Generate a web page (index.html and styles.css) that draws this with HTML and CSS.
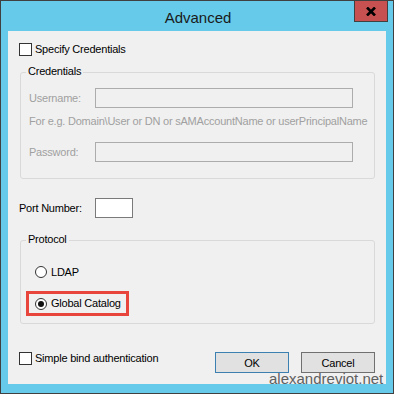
FILE: index.html
```html
<!DOCTYPE html>
<html>
<head>
<meta charset="utf-8">
<link rel="stylesheet" href="styles.css">
</head>
<body>
<div class="win">
  <div class="titlebar">
    <span class="title">Advanced</span>
    <div class="close"><svg width="10" height="9" viewBox="0 0 10 9"><path d="M1 0.5 L9 8.5 M9 0.5 L1 8.5" stroke="#000" stroke-width="2.6"/></svg></div>
  </div>
  <div class="client">
    <div class="check first"><span class="box"></span><span class="text">Specify Credentials</span></div>
    <div class="group cred">
      <span class="legend">Credentials</span>
      <div class="field"><span class="lbl dis">Username:</span><span class="input disabled wide"></span></div>
      <div class="hint dis">For e.g. Domain\User or DN or sAMAccountName or userPrincipalName</div>
      <div class="field pw"><span class="lbl dis">Password:</span><span class="input disabled wide"></span></div>
    </div>
    <div class="field port"><span class="lbl portlbl">Port Number:</span><span class="input portin"></span></div>
    <div class="group proto">
      <span class="legend">Protocol</span>
      <div class="radio ldap"><span class="circle"></span><span class="text">LDAP</span></div>
      <div class="radio gc"><span class="circle on"><span class="dot"></span></span><span class="text">Global Catalog</span></div>
    </div>
    <div class="bottom">
      <div class="check"><span class="box"></span><span class="text">Simple bind authentication</span></div>
      <div class="buttons">
        <div class="btn ok">OK</div>
        <div class="btn cancel">Cancel</div>
      </div>
    </div>
  </div>
  <div class="watermark">alexandreviot.net</div>
</div>
</body>
</html>
```

FILE: styles.css
```css
* { box-sizing: border-box; }
html, body { margin: 0; padding: 0; }
body { background: #fff; }
.win {
  position: relative;
  width: 394px;
  height: 394px;
  border: 1px solid #404040;
  background: #66cbea;
  padding: 0 7px 9px 7px;
  font-family: "Liberation Sans", Arial, sans-serif;
  font-size: 11px;
  letter-spacing: -0.22px;
  color: #000;
}
.titlebar {
  height: 30px;
  display: flex;
  align-items: center;
  justify-content: center;
}
.title {
  font-size: 15px;
  letter-spacing: 0;
  color: #1a1a1a;
  margin-top: 2px;
  margin-left: 2px;
}
.close {
  position: absolute;
  top: -1px;
  right: 5px;
  width: 34px;
  height: 22px;
  background: #c75050;
  border: 1px solid #404040;
  display: flex;
  align-items: center;
  justify-content: center;
}
.close svg { display: block; }
.client {
  height: 353px;
  background: #f0f0f0;
  padding: 0 11px;
  display: flex;
  flex-direction: column;
}
.check {
  display: flex;
  align-items: center;
  height: 13px;
}
.check.first { margin-top: 12px; }
.box {
  width: 13px;
  height: 13px;
  border: 1px solid #333;
  background: #fff;
  flex: none;
}
.check .text { margin-left: 3px; line-height: 13px; }
.group {
  position: relative;
  margin-left: 1px;
  border: 1px solid #d9d9d9;
  border-radius: 3px;
}
.legend {
  position: absolute;
  left: 5px;
  top: -8px;
  padding: 0 2px;
  line-height: 13px;
  background: #f0f0f0;
}
.cred {
  margin-top: 16px;
  height: 107px;
  padding: 15px 0 0 8px;
}
.field {
  display: flex;
  align-items: center;
  height: 20px;
}
.lbl { width: 66px; flex: none; }
.dis { color: #a0a0a0; }
.input {
  height: 20px;
  border: 1px solid #acacac;
  background: #f0f0f0;
  flex: none;
}
.wide { width: 258px; }
.hint { margin-top: 7px; line-height: 13px; white-space: nowrap; }
.pw { margin-top: 14px; }
.port { margin-top: 19px; }
.portlbl { width: 76px; }
.portin { width: 38px; background: #fff; border-color: #7a7a7a; }
.proto {
  margin-top: 22px;
  height: 84px;
  padding: 23px 0 0 0;
}
.radio {
  display: flex;
  align-items: center;
  height: 16px;
}
.ldap { padding-left: 14px; }
.gc {
  margin-top: 11px;
  margin-left: 5px;
  width: 103px;
  height: 25px;
  border: 3px solid #e8453c;
  padding-left: 6px;
}
.circle {
  width: 12px;
  height: 12px;
  border-radius: 50%;
  border: 1px solid #333;
  background: #fff;
  flex: none;
  display: flex;
  align-items: center;
  justify-content: center;
}
.dot {
  width: 6px;
  height: 6px;
  border-radius: 50%;
  background: #111;
}
.radio .text { margin-left: 4px; line-height: 13px; }
.bottom {
  margin-top: 28px;
  display: flex;
  justify-content: space-between;
  align-items: flex-start;
}
.bottom .check { margin-top: 0; }
.buttons { display: flex; gap: 12px; }
.btn {
  width: 74px;
  height: 21px;
  background: #e1e1e1;
  border: 1px solid #adadad;
  display: flex;
  align-items: center;
  justify-content: center;
}
.ok { border-color: #3c7fb1; }
.cancel { border-color: #707070; }
.watermark {
  position: absolute;
  left: 268px;
  top: 369px;
  font-size: 15px;
  letter-spacing: 0;
  line-height: 17px;
  color: #5f5f5f;
}
```
